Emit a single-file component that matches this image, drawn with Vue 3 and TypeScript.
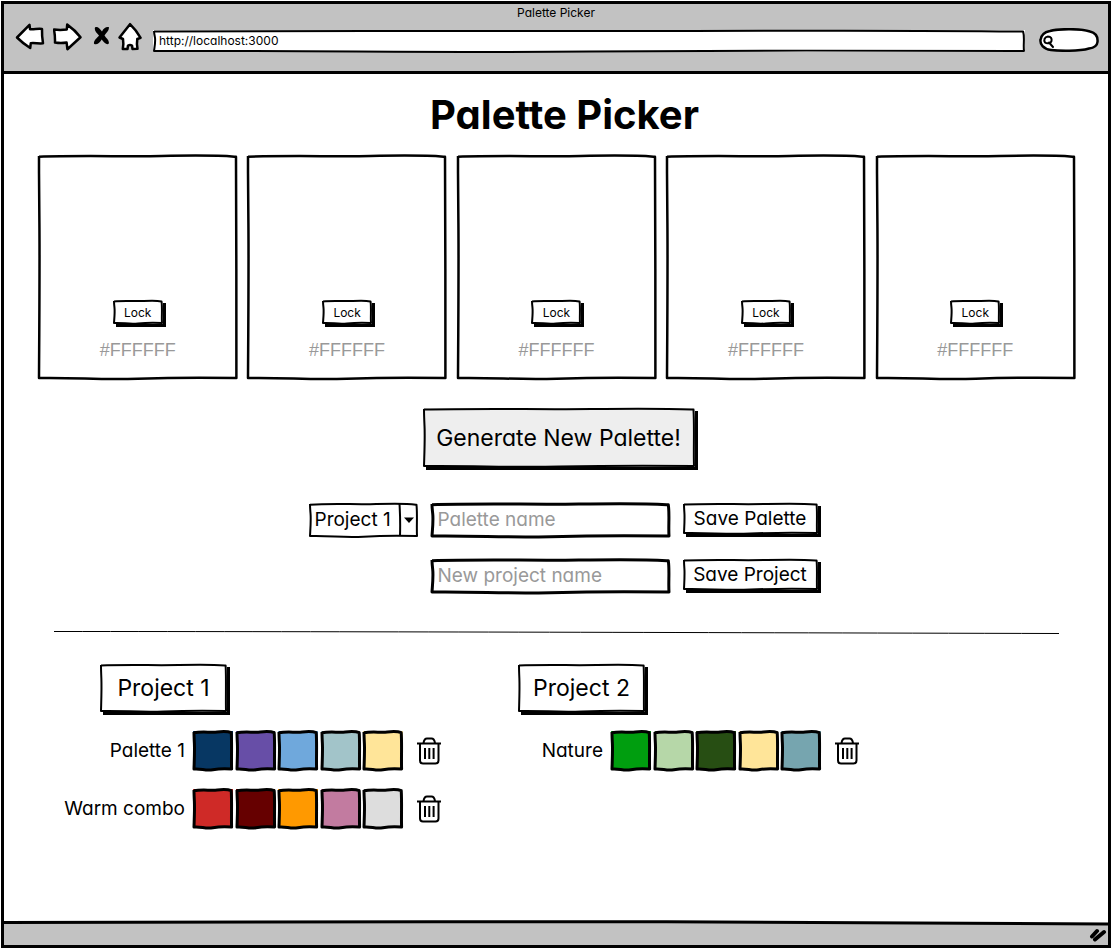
<script setup lang="ts">
import { h, ref } from 'vue'

interface Palette {
  name: string
  colors: string[]
}
interface Project {
  name: string
  palettes: Palette[]
}

/* Hand-drawn outline stretched over its parent; wx and wy are wobble amounts in percent. */
const Sketch = (props: { wx?: number; wy?: number }) => {
  const x = props.wx ?? 0.5
  const y = props.wy ?? 0.5
  const d =
    `M0 ${y} C20 ${-y} 45 ${y} 62 0 S90 ${-y} 99 ${y} L${100 - x} ${y} ` +
    `C${100 + x} 30 ${100 - x} 70 100 100 ` +
    `C80 ${100 - y} 70 ${100 - y} 50 ${100 + y} S20 ${100 - y} 0 100 ` +
    `C${x} 70 ${2 * x} 50 ${x} 30 S0 10 0 0`
  return h(
    'svg',
    { class: 'sketch', viewBox: '0 0 100 100', preserveAspectRatio: 'none', 'aria-hidden': 'true' },
    [h('path', { d, 'vector-effect': 'non-scaling-stroke' })],
  )
}
Sketch.props = ['wx', 'wy']

const url = ref('http://localhost:3000')
const query = ref('')
const selected = ref('Project 1')
const paletteName = ref('')
const projectName = ref('')
const swatches = ref(Array.from({ length: 5 }, () => '#FFFFFF'))

const projects: Project[] = [
  {
    name: 'Project 1',
    palettes: [
      { name: 'Palette 1', colors: ['#073763', '#674ea7', '#6fa8dc', '#a2c4c9', '#ffe599'] },
      { name: 'Warm combo', colors: ['#cf2a27', '#660000', '#ff9900', '#c27ba0', '#dddddd'] },
    ],
  },
  {
    name: 'Project 2',
    palettes: [
      { name: 'Nature', colors: ['#009e0f', '#b6d7a8', '#274e13', '#ffe599', '#76a5af'] },
    ],
  },
]
</script>

<template>
  <div class="browser">
    <header class="chrome">
      <div class="window-title">Palette Picker</div>
      <div class="toolbar">
        <nav class="nav" aria-label="Browser">
          <button type="button" aria-label="Back">
            <svg width="30" height="30" viewBox="0 0 30 30">
              <path class="outline" d="M2 15.5 14.5 2.8 15 7.2C19 7.6 23 6.4 27 7Q26.8 14 28 21.3C24 21.8 20 20.8 15.8 21.2L15.2 26Q8 21.5 2 15.5Z" />
            </svg>
          </button>
          <button type="button" aria-label="Forward">
            <svg width="30" height="30" viewBox="0 0 30 30">
              <path class="outline" d="M1 7.5Q7 8.4 13.8 7.5L14.2 2.6Q22 8 27.5 15.3L14.4 27.2 13.6 20.6Q8 21.6 2 20.6 2.2 14 1 7.5Z" />
            </svg>
          </button>
          <button type="button" aria-label="Stop">
            <svg width="18" height="30" viewBox="0 0 18 30">
              <path d="M4 5.5C6 4 8.500 6 11 9.500 12.500 6 15 4.500 17.800 5 18.600 8 15.500 10.500 13.500 13.500 15.500 16.500 18.500 18.500 17.800 21.500 16 23.500 13 20.500 10.700 17.500 8.500 21 5.500 23.500 3 21.800 2.500 18.500 6 16 8 13.500 5.500 11 3 8.500 4 5.500Z" />
            </svg>
          </button>
          <button type="button" aria-label="Home">
            <svg width="26" height="30" viewBox="0 0 26 30">
              <path class="outline" d="M13 2.200Q8 8.500 2.500 15.500L6 17Q6.800 22 5.800 27L10.500 27 11 23.500Q13 22.500 15 23.500L15.500 27 20.500 26.800Q19.500 22 20.300 17L23.600 15.800Q19 8 13 2.200Z" />
            </svg>
          </button>
        </nav>
        <div class="address">
          <Sketch :wx="0.1" :wy="3" />
          <input v-model="url" type="text" aria-label="Address" />
        </div>
        <div class="search">
          <svg class="search-shape" viewBox="0 0 60 24" preserveAspectRatio="none" aria-hidden="true">
            <path class="outline" d="M11 3C20 .5 42 .5 51 3.500 57 5 59 9 58.500 14 58 19 54 20 50 20.500 40 23.500 20 23 12 22 4 21 1 16 1.500 12 2 7 6 4 11 3Z" />
            <path class="lens" d="M9 8.500C12 8.500 13 10.500 12.500 13 12 15.500 8 16 6 14.500 4.500 12 5.500 9 9 8.500M10 14.500 14 19" />
          </svg>
          <input v-model="query" type="search" aria-label="Search" />
        </div>
      </div>
    </header>

    <main class="page">
      <h1>Palette Picker</h1>

      <section class="cards" aria-label="Current palette">
        <article v-for="(hex, i) in swatches" :key="i" class="card">
          <Sketch :wx="0.2" :wy="0.3" />
          <button type="button" class="btn lock"><Sketch :wx="1" :wy="2" />Lock</button>
          <span class="hex">{{ hex }}</span>
        </article>
      </section>

      <div class="generate-row">
        <button type="button" class="btn generate"><Sketch :wx="0.2" :wy="1" />Generate New Palette!</button>
      </div>

      <form class="save" @submit.prevent>
        <div class="field select">
          <Sketch :wx="0.5" :wy="2" />
          <select v-model="selected" aria-label="Project">
            <option v-for="p in projects" :key="p.name">{{ p.name }}</option>
          </select>
          <svg class="caret" viewBox="0 0 20 34" preserveAspectRatio="none" aria-hidden="true">
            <path class="rule" d="M1.500 1Q2.500 17 2 33" />
            <path d="M6 14.500H16L11 20Z" />
          </svg>
        </div>
        <div class="field">
          <Sketch :wx="0.3" :wy="2" />
          <input v-model="paletteName" type="text" placeholder="Palette name" aria-label="Palette name" />
        </div>
        <button type="button" class="btn"><Sketch :wx="0.3" :wy="2" />Save Palette</button>
        <div class="field second">
          <Sketch :wx="0.3" :wy="2" />
          <input v-model="projectName" type="text" placeholder="New project name" aria-label="New project name" />
        </div>
        <button type="button" class="btn"><Sketch :wx="0.3" :wy="2" />Save Project</button>
      </form>

      <svg class="divider" viewBox="0 0 100 3" preserveAspectRatio="none" aria-hidden="true">
        <path d="M0 .5C30 .5 60 1.500 100 2.500" vector-effect="non-scaling-stroke" />
      </svg>

      <div class="projects">
        <section v-for="project in projects" :key="project.name" class="project">
          <button type="button" class="btn project-name"><Sketch :wx="0.3" :wy="1" />{{ project.name }}</button>
          <div v-for="palette in project.palettes" :key="palette.name" class="palette">
            <span class="label">{{ palette.name }}</span>
            <div class="colors">
              <span v-for="(color, i) in palette.colors" :key="i" class="color" :style="{ backgroundColor: color }">
                <Sketch :wx="1" :wy="2" />
              </span>
            </div>
            <button type="button" class="trash" :aria-label="`Delete ${palette.name}`">
              <svg width="24" height="28" viewBox="0 0 24 28">
                <path d="M0 6.500H24M6.500 6C7 3 8 1.500 10 1.500H14.500C16.500 1.500 17.500 3 18 6M3 7V23.500Q3 26.500 6 26.500H18.500Q21.500 26.500 21.500 23.500V7M8 11V22M12.300 11V22M16.600 11V22" />
              </svg>
            </button>
          </div>
        </section>
      </div>
    </main>

    <footer class="status">
      <svg class="slope" viewBox="0 0 100 4" preserveAspectRatio="none" aria-hidden="true">
        <path class="above" d="M0 0H100V3L50 .5H0Z" />
        <path class="edge" d="M0 1.500C15 1.500 40 .5 60 .8S90 2.500 100 3" vector-effect="non-scaling-stroke" />
      </svg>
      <svg class="grip" width="18" height="14" viewBox="0 0 18 14" aria-hidden="true">
        <path d="M3 8.500 8 3M6 11.500 15 4" />
      </svg>
    </footer>
  </div>
</template>

<style>
body {
  margin: 0;
  background: #fff;
}
</style>

<style scoped>
.browser {
  box-sizing: border-box;
  min-height: calc(100vh - 2px);
  margin: 1px;
  border: 3px solid #000;
  display: flex;
  flex-direction: column;
  color: #000;
  font-family: Inter, "Open Sans", sans-serif;
  font-feature-settings: "cv11";
}
button,
input,
select {
  box-sizing: border-box;
  margin: 0;
  padding: 0;
  border: 0;
  border-radius: 0;
  background: transparent;
  color: inherit;
  font: inherit;
  font-feature-settings: inherit;
  appearance: none;
}
button {
  cursor: pointer;
}
input,
select {
  position: relative;
  width: 100%;
  height: 100%;
}
svg {
  display: block;
}
.sketch {
  position: absolute;
  inset: 1px;
  width: calc(100% - 2px);
  height: calc(100% - 2px);
  overflow: visible;
  fill: none;
  stroke: #000;
  stroke-width: 3px;
  stroke-linejoin: round;
  pointer-events: none;
}
.outline {
  fill: #fff;
  stroke: #000;
  stroke-width: 2.5px;
  stroke-linejoin: round;
}

.chrome {
  background: #c2c2c2;
  border-bottom: 3px solid #000;
}
.window-title {
  font-size: 12px;
  line-height: 18px;
  text-align: center;
}
.toolbar {
  display: flex;
  align-items: flex-end;
  padding: 0 9px 19px 11px;
}
.nav {
  display: flex;
  gap: 8px;
  margin-right: 10px;
}
.address {
  position: relative;
  flex: 1;
  height: 22px;
  background: #fff;
  font-size: 12px;
}
.address .sketch {
  stroke-width: 2px;
}
.card > .sketch {
  stroke-width: 2.5px;
}
.address input {
  padding: 0 6px 2px;
}
.search {
  position: relative;
  width: 60px;
  height: 24px;
  margin-left: 14px;
}
.search input {
  padding: 0 8px 0 16px;
  font-size: 12px;
}
.search-shape {
  position: absolute;
  inset: 0;
  width: 100%;
  height: 100%;
}
.lens {
  fill: none;
  stroke: #000;
  stroke-width: 2px;
  stroke-linecap: round;
}

.page {
  flex: 1;
  padding: 16px 33px 0 34px;
}
h1 {
  margin: 0;
  padding-left: 16px;
  font-size: 40px;
  line-height: 50px;
  font-weight: 700;
  text-align: center;
}
.cards {
  display: grid;
  grid-template-columns: repeat(5, 1fr);
  gap: 10px;
  margin-top: 15px;
}
.card {
  position: relative;
  height: 224px;
  display: flex;
  flex-direction: column;
  align-items: center;
  justify-content: flex-end;
}
.hex {
  margin: 14px 0 17px;
  color: #999;
  font-family: "Liberation Sans", Arial, sans-serif;
  font-size: 18px;
  line-height: 24px;
}
.btn {
  position: relative;
  background: #fff;
  box-shadow: 3px 3px 0 #000;
  font-size: 19px;
}
.btn .sketch,
.select .sketch {
  stroke-width: 2px;
}
.lock {
  width: 50px;
  height: 24px;
  font-size: 12px;
}
.generate-row {
  display: flex;
  justify-content: center;
  margin-top: 29px;
  padding-left: 4px;
}
.generate {
  width: 272px;
  height: 59px;
  background: #eee;
  font-size: 23px;
}
.save {
  display: grid;
  grid-template-columns: 109px 239px 135px;
  grid-auto-rows: 34px;
  justify-content: center;
  gap: 22px 13px;
  margin-top: 36px;
  padding-left: 13px;
  font-size: 19px;
}
.field {
  position: relative;
}
.field input {
  padding: 0 7px 2px;
}
.field input::placeholder {
  color: #999;
  opacity: 1;
}
.second {
  grid-column: 2;
}
.save .btn {
  height: 31px;
}
.select select {
  padding: 0 20px 2px 6px;
}
.caret {
  position: absolute;
  top: 0;
  right: 0;
  width: 20px;
  height: 100%;
  pointer-events: none;
}
.rule {
  fill: none;
  stroke: #000;
  stroke-width: 2px;
}
.divider {
  width: calc(100% - 32px);
  height: 3px;
  margin: 38px 16px 0;
  fill: none;
  stroke: #000;
  stroke-width: 1px;
}
.projects {
  display: grid;
  grid-template-columns: repeat(auto-fill, 418px);
  row-gap: 24px;
  margin-top: 30px;
  padding: 0 0 24px 22px;
}
.project-name {
  display: block;
  width: 127px;
  height: 48px;
  margin: 0 0 19px 40px;
  font-size: 23px;
}
.palette {
  display: grid;
  grid-template-columns: 125px 210px 24px;
  column-gap: 8px;
  align-items: center;
  margin-bottom: 19px;
}
.label {
  font-size: 19px;
  line-height: 24px;
  text-align: right;
  white-space: nowrap;
}
.colors {
  display: grid;
  grid-template-columns: repeat(5, 1fr);
  gap: 3px;
}
.color {
  position: relative;
  height: 39px;
}
.trash {
  margin-left: 6px;
}
.trash path {
  fill: none;
  stroke: #000;
  stroke-width: 2px;
}

.status {
  position: relative;
  height: 24px;
  background: #c2c2c2;
  display: flex;
  align-items: center;
  justify-content: flex-end;
}
.slope {
  position: absolute;
  top: 0;
  left: 0;
  width: 100%;
  height: 4px;
  overflow: visible;
}
.above {
  fill: #fff;
}
.edge {
  fill: none;
  stroke: #000;
  stroke-width: 3px;
}
.grip {
  margin: 4px 1px 0 0;
}
.grip path {
  fill: none;
  stroke: #000;
  stroke-width: 4px;
  stroke-linecap: round;
}
</style>
